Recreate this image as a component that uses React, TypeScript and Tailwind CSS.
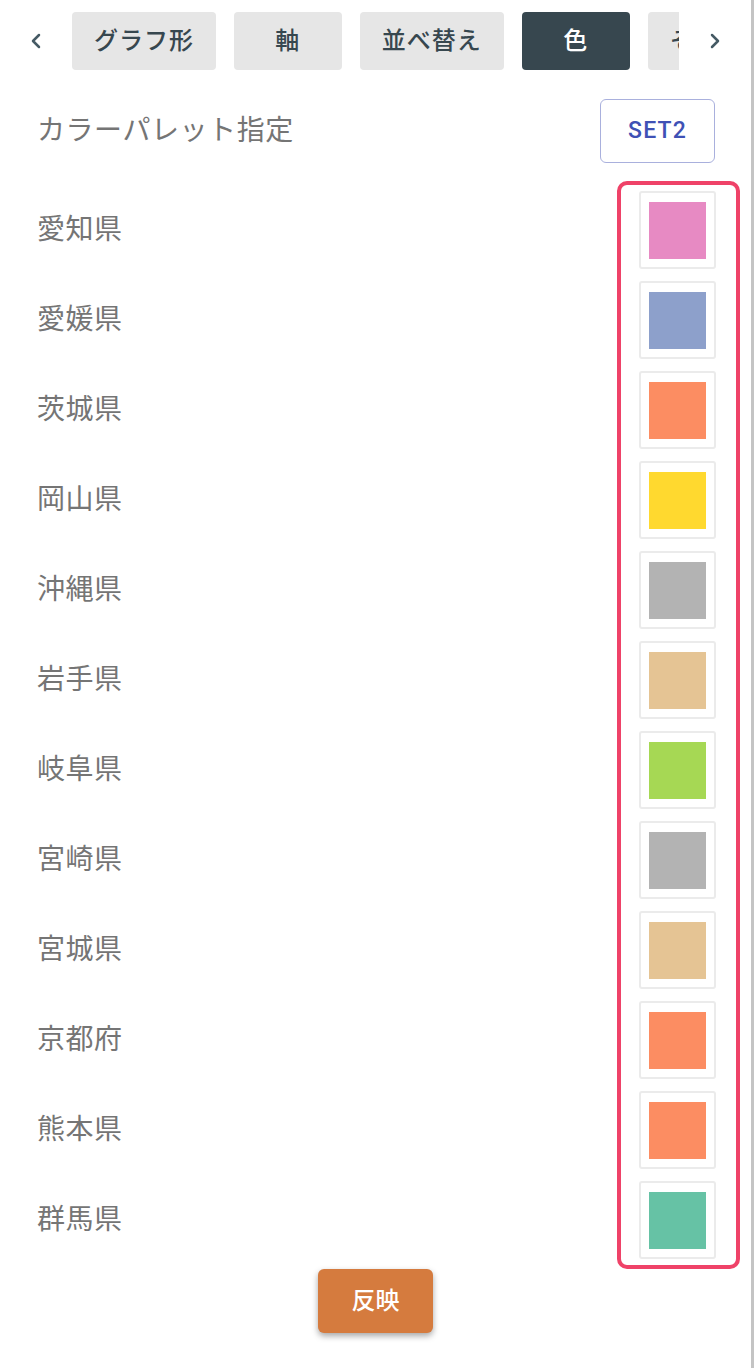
import React from "react";
import { ChevronLeft, ChevronRight } from "lucide-react";

const font = { fontFamily: "Roboto, 'Noto Sans CJK JP', sans-serif" };

const tabs = [
  { label: "グラフ形", active: false },
  { label: "軸", active: false },
  { label: "並べ替え", active: false },
  { label: "色", active: true },
  { label: "その他", active: false },
];

const rows = [
  { name: "愛知県", color: "#e78ac3" },
  { name: "愛媛県", color: "#8da0cb" },
  { name: "茨城県", color: "#fc8d62" },
  { name: "岡山県", color: "#ffd92f" },
  { name: "沖縄県", color: "#b3b3b3" },
  { name: "岩手県", color: "#e5c494" },
  { name: "岐阜県", color: "#a6d854" },
  { name: "宮崎県", color: "#b3b3b3" },
  { name: "宮城県", color: "#e5c494" },
  { name: "京都府", color: "#fc8d62" },
  { name: "熊本県", color: "#fc8d62" },
  { name: "群馬県", color: "#66c2a5" },
];

export default function App() {
  return (
    <div className="flex min-h-[1368px] bg-white" style={font}>
      <div className="flex w-[751px] flex-col">
        {/* Tab bar */}
        <div className="mt-[12px] flex h-[58px] items-center">
          <button className="flex w-[72px] items-center justify-center text-[#455a64]" aria-label="前へ">
            <ChevronLeft size={24} strokeWidth={2.5} />
          </button>
          <div className="flex h-full w-[607px] gap-[18px] overflow-hidden">
            {tabs.map((t) => (
              <div
                key={t.label}
                className={
                  t.active
                    ? "flex h-full min-w-[108px] shrink-0 items-center justify-center rounded-[4px] bg-[#37474f] px-[22px] text-[24px] font-medium tracking-[0.04em] text-white"
                    : "flex h-full min-w-[108px] shrink-0 items-center justify-center rounded-[4px] bg-[#e6e6e6] px-[22px] text-[24px] font-medium tracking-[0.04em] text-[#37474f]"
                }
              >
                {t.label}
              </div>
            ))}
          </div>
          <button className="flex flex-1 items-center justify-center text-[#455a64]" aria-label="次へ">
            <ChevronRight size={24} strokeWidth={2.5} />
          </button>
        </div>

        {/* Palette heading */}
        <div className="mt-[29px] flex items-center justify-between pl-[37px] pr-[36px]">
          <span className="text-[28px] tracking-[0.02em] text-[#757575]">カラーパレット指定</span>
          <button className="flex h-[64px] w-[115px] items-center justify-center rounded-[6px] border border-[#a9b0dd] text-[23px] font-medium tracking-[0.05em] text-[#3f51b5]">
            SET2
          </button>
        </div>

        {/* Series colours */}
        <div className="mt-[18px] flex justify-between pl-[37px] pr-[11px]">
          <div className="flex flex-col gap-[12px] pt-[10px]">
            {rows.map((r, i) => (
              <div key={i} className="flex h-[78px] items-center text-[28px] tracking-[0.02em] text-[#757575]">
                {r.name}
              </div>
            ))}
          </div>
          <div className="flex flex-col gap-[12px] rounded-[10px] border-4 border-[#ef4268] pb-[6px] pl-[18px] pr-[20px] pt-[6px]">
            {rows.map((r, i) => (
              <div
                key={i}
                className="flex h-[78px] w-[77px] items-center justify-center rounded-[3px] border-2 border-[#ebebeb]"
              >
                <div className="h-[57px] w-[57px]" style={{ backgroundColor: r.color }} />
              </div>
            ))}
          </div>
        </div>

        <button className="flex h-[64px] w-[115px] items-center justify-center self-center rounded-[6px] bg-[#d57b3e] text-[24px] font-medium text-white shadow-[0_3px_6px_rgba(0,0,0,0.35)]">
          反映
        </button>
      </div>
      <div className="w-[3px] bg-[#c4c4c4]" />
    </div>
  );
}
